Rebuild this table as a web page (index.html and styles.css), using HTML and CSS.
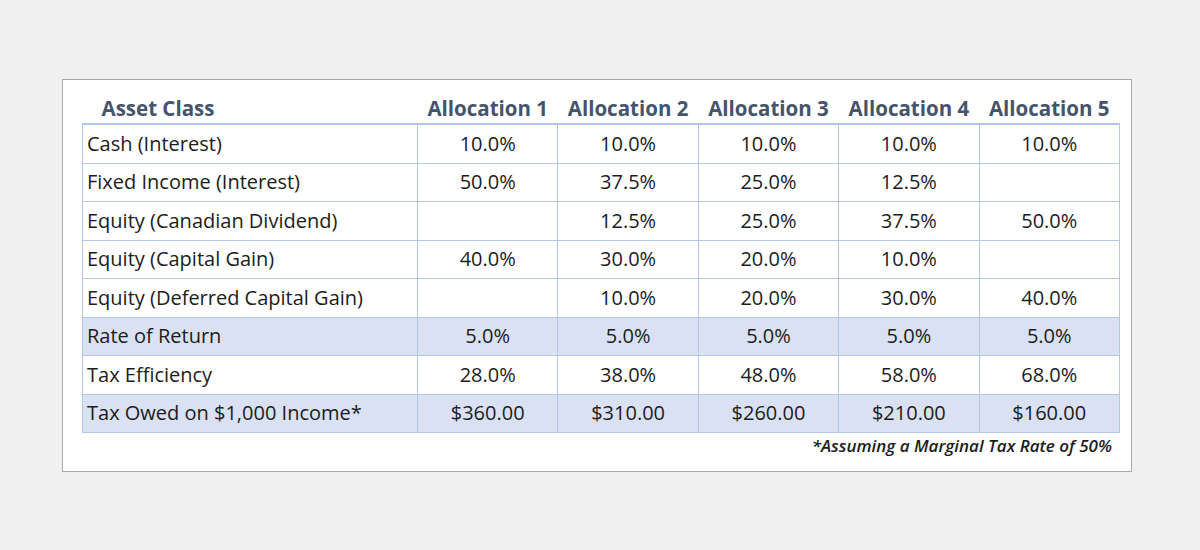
FILE: index.html
```html
<!DOCTYPE html>
<html>
<head>
<meta charset="utf-8">
<link rel="stylesheet" href="styles.css">
</head>
<body>
<div class="panel">
  <table class="alloc">
    <colgroup>
      <col class="c-first">
      <col class="c-num"><col class="c-num"><col class="c-num"><col class="c-num"><col class="c-num">
    </colgroup>
    <thead>
      <tr>
        <th class="h-first">Asset Class</th>
        <th>Allocation 1</th>
        <th>Allocation 2</th>
        <th>Allocation 3</th>
        <th>Allocation 4</th>
        <th>Allocation 5</th>
      </tr>
    </thead>
    <tbody>
      <tr><td>Cash (Interest)</td><td>10.0%</td><td>10.0%</td><td>10.0%</td><td>10.0%</td><td>10.0%</td></tr>
      <tr><td>Fixed Income (Interest)</td><td>50.0%</td><td>37.5%</td><td>25.0%</td><td>12.5%</td><td></td></tr>
      <tr><td>Equity (Canadian Dividend)</td><td></td><td>12.5%</td><td>25.0%</td><td>37.5%</td><td>50.0%</td></tr>
      <tr><td>Equity (Capital Gain)</td><td>40.0%</td><td>30.0%</td><td>20.0%</td><td>10.0%</td><td></td></tr>
      <tr><td>Equity (Deferred Capital Gain)</td><td></td><td>10.0%</td><td>20.0%</td><td>30.0%</td><td>40.0%</td></tr>
      <tr class="shade"><td>Rate of Return</td><td>5.0%</td><td>5.0%</td><td>5.0%</td><td>5.0%</td><td>5.0%</td></tr>
      <tr><td>Tax Efficiency</td><td>28.0%</td><td>38.0%</td><td>48.0%</td><td>58.0%</td><td>68.0%</td></tr>
      <tr class="shade"><td>Tax Owed on $1,000 Income*</td><td>$360.00</td><td>$310.00</td><td>$260.00</td><td>$210.00</td><td>$160.00</td></tr>
    </tbody>
  </table>
  <p class="note">*Assuming a Marginal Tax Rate of 50%</p>
</div>
</body>
</html>
```
FILE: styles.css
```css
html, body {
  margin: 0;
  padding: 0;
  background: #f0f0f0;
}
body {
  padding: 79px 0 0 62px;
  font-family: "Open Sans", "Liberation Sans", sans-serif;
  color: #1c1c1c;
}
.panel {
  box-sizing: border-box;
  width: 1070px;
  height: 393px;
  background: #ffffff;
  border: 1px solid #a8a8a8;
  padding: 0 0 0 19px;
}
.alloc {
  border-collapse: collapse;
  table-layout: fixed;
  width: 1037px;
}
.c-first { width: 335px; }
.c-num { width: 140.4px; }
.alloc th {
  height: 41px;
  padding: 0;
  font-size: 20.5px;
  font-weight: 700;
  color: #44546a;
  text-align: center;
  vertical-align: bottom;
  padding-bottom: 2px;
  line-height: 1.2;
  border-bottom: 2px solid #b4c6e7;
  white-space: nowrap;
}
.alloc th.h-first {
  text-align: left;
  padding-left: 19px;
}
.alloc td {
  height: 37.5px;
  padding: 0;
  border: 1px solid #b4c6e7;
  font-size: 20px;
  line-height: 1.2;
  text-align: center;
  vertical-align: middle;
  white-space: nowrap;
}
.alloc td:first-child {
  text-align: left;
  padding-left: 4px;
}
.alloc tr.shade td {
  background: #d9e1f2;
}
.note {
  margin: 0;
  width: 1030px;
  text-align: right;
  font-size: 17px;
  line-height: 26px;
  font-style: italic;
  font-weight: 600;
  color: #1c1c1c;
}
```
